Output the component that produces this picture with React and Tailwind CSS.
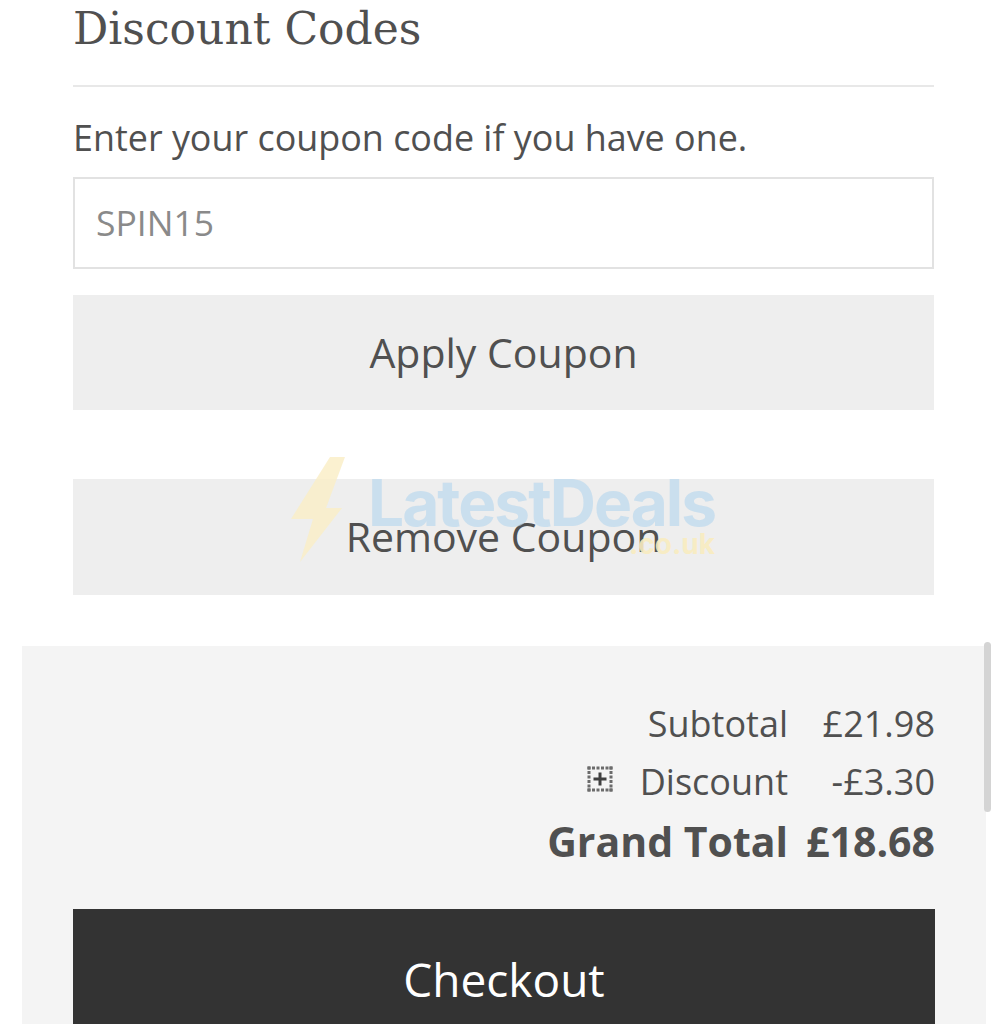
function Row({ children, className }) {
  return <div className={"flex justify-end items-center " + className}>{children}</div>;
}

// dotted square with a plus, the page's missing-glyph style expander
function DottedPlus() {
  const stops = [2, 6.5, 11, 15.5, 20, 24];
  return (
    <svg width="26" height="26" viewBox="0 0 26 26" className="mr-[27px] mb-[6px]">
      {stops.map((a) => (
        <g key={a} fill="#6b6b6b">
          <rect x={a - 1.5} y="0.5" width="3" height="3" />
          <rect x={a - 1.5} y="22.5" width="3" height="3" />
          <rect x="0.5" y={a - 1.5} width="3" height="3" />
          <rect x="22.5" y={a - 1.5} width="3" height="3" />
        </g>
      ))}
      <path d="M13 6.5v13M6.5 13h13" stroke="#3f3f3f" strokeWidth="3" />
    </svg>
  );
}

function LatestDealsMark() {
  return (
    <div className="absolute left-[290px] top-[456px] flex items-start opacity-90 pointer-events-none">
      <svg width="56" height="106" viewBox="0 0 56 106">
        <path d="M40 1 L55 1 L36 52 L52 52 L10 106 L23 63 L1 63 Z" fill="#fbeec6" fillOpacity="0.9" />
      </svg>
      <div className="ml-[22px] mt-[12px] relative">
        <div className="text-[64px] leading-[70px] font-bold tracking-[-2px] text-[#b9d8ee]/75 font-['Inter',sans-serif]">LatestDeals</div>
        <div className="absolute right-0 top-[60px] text-[28px] leading-[32px] font-bold text-[#f9ecc0] font-['Inter',sans-serif]">.co.uk</div>
      </div>
    </div>
  );
}

export default function App() {
  return (
    <div className="relative h-[1024px] overflow-hidden bg-white text-[#505050] font-['Open_Sans',sans-serif]">
      <div className="px-[73px]">
        <h1 className="h-[87px] border-b-2 border-[#e8e8e8] pt-[1px] text-[44px] leading-[56px] font-['DejaVu_Serif',serif]">Discount Codes</h1>
        <p className="mt-[26px] text-[35.9px] leading-[50px]">Enter your coupon code if you have one.</p>
        <div className="mt-[14px] h-[92px] flex items-center border-2 border-[#e2e2e2] px-[21px] text-[35.5px] text-[#8a8a8a]">SPIN15</div>
        <div className="mt-[26px] h-[115px] flex items-center justify-center bg-[#eeeeee] text-[41px]">Apply Coupon</div>
        <div className="mt-[69px] h-[116px] flex items-center justify-center bg-[#eeeeee] text-[41px]">Remove Coupon</div>
      </div>

      <div className="mt-[51px] ml-[22px] mr-[21px] h-[400px] bg-[#f4f4f4] px-[51px] pt-[49px]">
        <Row className="h-[58px] text-[36px]">
          <span>Subtotal</span>
          <span className="w-[147px] text-right">£21.98</span>
        </Row>
        <Row className="h-[58px] text-[36px]">
          <DottedPlus />
          <span>Discount</span>
          <span className="w-[147px] text-right">-£3.30</span>
        </Row>
        <Row className="h-[62px] text-[41px] font-bold">
          <span>Grand Total</span>
          <span className="w-[147px] text-right">£18.68</span>
        </Row>
        <div className="mt-[36px] h-[140px] flex items-start pt-[35px] justify-center bg-[#333333] text-white text-[46px] leading-[70px]">Checkout</div>
      </div>

      <LatestDealsMark />
      <div className="absolute left-[984px] top-[642px] h-[170px] w-[7px] rounded-full bg-[#d4d4d4]" />
    </div>
  );
}
